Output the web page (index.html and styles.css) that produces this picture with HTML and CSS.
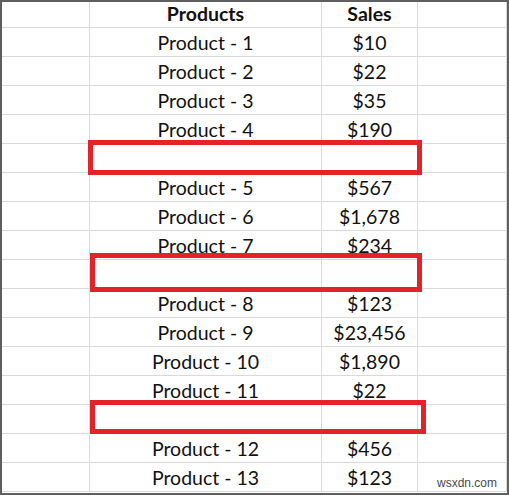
FILE: index.html
```html
<!DOCTYPE html>
<html lang="en">
<head>
    <meta charset="UTF-8">
    <title>Products and Sales</title>
    <link rel="stylesheet" href="styles.css">
</head>
<body>
    <div class="sheet">
        <div class="grid">
            <div class="cell head"></div><div class="cell head bold">Products</div><div class="cell head bold">Sales</div><div class="cell head"></div>
            <div class="cell"></div><div class="cell">Product - 1</div><div class="cell">$10</div><div class="cell"></div>
            <div class="cell"></div><div class="cell">Product - 2</div><div class="cell">$22</div><div class="cell"></div>
            <div class="cell"></div><div class="cell">Product - 3</div><div class="cell">$35</div><div class="cell"></div>
            <div class="cell"></div><div class="cell">Product - 4</div><div class="cell">$190</div><div class="cell"></div>
            <div class="cell"></div><div class="cell"></div><div class="cell"></div><div class="cell"></div>
            <div class="cell"></div><div class="cell">Product - 5</div><div class="cell">$567</div><div class="cell"></div>
            <div class="cell"></div><div class="cell">Product - 6</div><div class="cell">$1,678</div><div class="cell"></div>
            <div class="cell"></div><div class="cell">Product - 7</div><div class="cell">$234</div><div class="cell"></div>
            <div class="cell"></div><div class="cell"></div><div class="cell"></div><div class="cell"></div>
            <div class="cell"></div><div class="cell">Product - 8</div><div class="cell">$123</div><div class="cell"></div>
            <div class="cell"></div><div class="cell">Product - 9</div><div class="cell">$23,456</div><div class="cell"></div>
            <div class="cell"></div><div class="cell">Product - 10</div><div class="cell">$1,890</div><div class="cell"></div>
            <div class="cell"></div><div class="cell">Product - 11</div><div class="cell">$22</div><div class="cell"></div>
            <div class="cell"></div><div class="cell"></div><div class="cell"></div><div class="cell"></div>
            <div class="cell"></div><div class="cell">Product - 12</div><div class="cell">$456</div><div class="cell"></div>
            <div class="cell"></div><div class="cell">Product - 13</div><div class="cell">$123</div><div class="cell"></div>
        </div>

        <!-- highlight boxes over the blank rows -->
        <div class="mark mark-1"></div>
        <div class="mark mark-2"></div>
        <div class="mark mark-3"></div>

        <span class="watermark">wsxdn.com</span>
    </div>
</body>
</html>
```

FILE: styles.css
```css
* {
    margin: 0;
    padding: 0;
    box-sizing: border-box;
}

body {
    background: #fff;
    font-family: Lato, "Open Sans", sans-serif;
    color: #111;
}

.sheet {
    position: relative;
    width: 509px;
    height: 495px;
    border: 2px solid #5f5f5f;
    overflow: hidden;
    background: #fff;
}

.grid {
    display: grid;
    grid-template-columns: 88px 232px 96px 1fr;
    grid-template-rows: 26px;
    grid-auto-rows: 29px;
}

.cell {
    border-right: 1px solid #d9d9d9;
    border-bottom: 1px solid #d9d9d9;
    display: flex;
    align-items: flex-end;
    justify-content: center;
    padding-bottom: 2px;
    font-size: 19.5px;
    line-height: 22px;
    white-space: nowrap;
}

.bold {
    font-weight: bold;
}

.mark {
    position: absolute;
    border: 5px solid #e2232a;
}

.mark-1 {
    left: 86px;
    top: 138px;
    width: 334px;
    height: 35px;
}

.mark-2 {
    left: 88px;
    top: 251px;
    width: 332px;
    height: 39px;
}

.mark-3 {
    left: 88px;
    top: 398px;
    width: 336px;
    height: 34px;
}

.watermark {
    position: absolute;
    right: 10px;
    bottom: 3px;
    font-family: "Liberation Sans", sans-serif;
    font-size: 12px;
    color: #4a4a4a;
}
```
